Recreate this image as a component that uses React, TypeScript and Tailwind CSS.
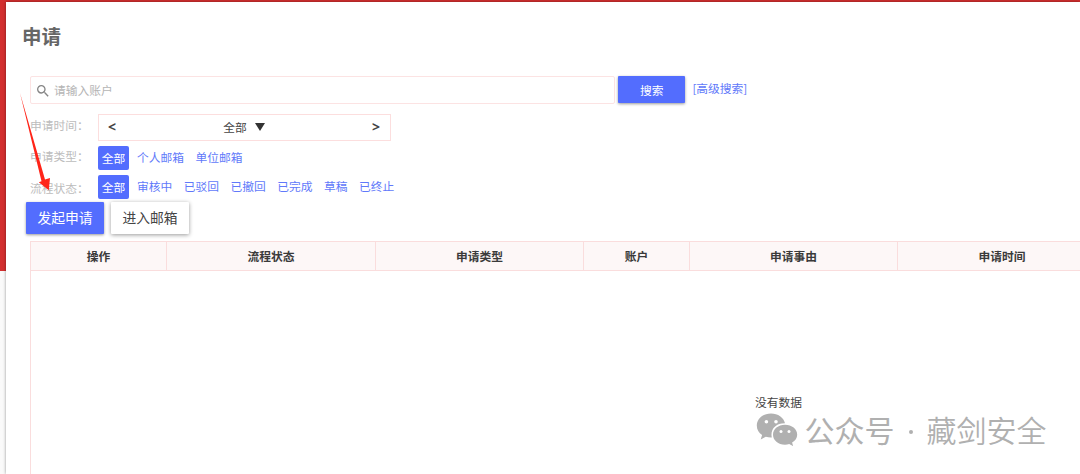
import React from "react";

const columns = [
  { label: "操作", width: "w-[136px]" },
  { label: "流程状态", width: "w-[209px]" },
  { label: "申请类型", width: "w-[208px]" },
  { label: "账户", width: "w-[106px]" },
  { label: "申请事由", width: "w-[208px]" },
  { label: "申请时间", width: "w-[209px]" },
];

function Filter({ label, options, offset }: { label: string; options: string[]; offset: string }) {
  return (
    <div className="flex h-6 items-center">
      <span className={`w-[68px] shrink-0 text-[#bcbcbc] ${offset}`}>{label}：</span>
      <span className="mr-2 flex h-6 w-[31px] items-center justify-center rounded-[2px] bg-[#536dfe] pb-px text-white">全部</span>
      <div className="flex gap-[11.5px] pb-[2px] text-[#6179fa]">
        {options.map((o) => (
          <a key={o}>{o}</a>
        ))}
      </div>
    </div>
  );
}

function SearchIcon() {
  return (
    <svg className="mt-px h-4 w-4" viewBox="0 0 24 24" fill="#858585">
      <path d="M15.5 14h-.79l-.28-.27A6.47 6.47 0 0 0 16 9.5 6.5 6.5 0 1 0 9.5 16c1.61 0 3.09-.59 4.23-1.57l.27.28v.79l5 4.99L20.49 19l-4.99-5zm-6 0C7.01 14 5 11.99 5 9.5S7.01 5 9.5 5 14 7.01 14 9.5 11.99 14 9.5 14z" />
    </svg>
  );
}

function WechatIcon() {
  return (
    <svg className="h-[34px] w-[42px]" viewBox="0 0 42 34">
      <path fill="#b0b0b0" d="M15 1.500C7 1.500 .8 6.500 .8 13.500c0 4.100 2 7.300 5.300 9.600L4.700 27.500l5.100-2.700c2 .6 4.100 .8 6 .7C14 17 20 11 29 11.200 27.700 5.500 22 1.500 15 1.500Z" />
      <path fill="#b0b0b0" d="M29 12.800c-6.800 0-12 4.300-12 9.900s5.200 10 12 10c1.500 0 2.900-.2 4.200-.6l3.900 2-1-3.500c3.200-2 5.100-4.700 5.100-7.900 0-5.600-5.400-9.900-12.200-9.900Z" />
      <g fill="#fff">
        <circle cx="10.400" cy="9.800" r="1.800" />
        <circle cx="20" cy="9.800" r="1.800" />
        <circle cx="25" cy="19.500" r="1.500" />
        <circle cx="33" cy="19.500" r="1.500" />
      </g>
    </svg>
  );
}

export default function App() {
  return (
    <div className="relative h-[474px] w-[1080px] overflow-hidden bg-white font-['Noto_Sans_CJK_SC',sans-serif] text-[11.75px] leading-none text-[#444]">
      <div className="flex h-full flex-col bg-linear-to-b from-[#d32f2f] from-[271px] to-[#fafafa] to-[271px] pt-[2px] pl-[6px]">
        <main className="flex flex-1 flex-col bg-white pl-6 shadow-[0_0_3px_rgba(0,0,0,0.4)]">
          <h1 className="-ml-2 flex h-[74px] items-center pb-[6px] text-[19.5px] font-bold text-[#666]">申请</h1>

          <div className="flex h-7 items-center">
            <div className="flex h-7 w-[585px] items-center gap-[3px] rounded-[2px] border border-[#fce3e3] pl-[4px] text-[#b5b5b5]">
              <SearchIcon />
              <span className="pb-px">请输入账户</span>
            </div>
            <button className="mb-px ml-[3.4px] h-[27px] w-[66.5px] rounded-[1px] bg-[#536dfe] text-white shadow-[0_1px_3px_rgba(0,0,0,0.4)]">搜索</button>
            <a className="ml-[7.5px] pb-1 text-[#6179fa]">[高级搜索]</a>
          </div>

          <div className="mt-[10px] flex h-[27px] items-center">
            <span className="w-[68px] pb-[5px] text-[#bcbcbc]">申请时间：</span>
            <div className="flex h-[27px] w-[293px] items-center justify-between border border-[#fcdede] pr-[10px] pl-[9px] pb-px">
              <span className="font-['Open_Sans',sans-serif] text-[14px] font-bold">&lt;</span>
              <span className="flex items-center gap-2">
                <span className="pb-px">全部</span>
                <svg className="h-2 w-[10px]" viewBox="0 0 10 8">
                  <path d="M0 0h10L5 8Z" fill="#333" />
                </svg>
              </span>
              <span className="font-['Open_Sans',sans-serif] text-[14px] font-bold">&gt;</span>
            </div>
          </div>

          <div className="mt-[5px] flex flex-col gap-[5px]">
            <Filter label="申请类型" options={["个人邮箱", "单位邮箱"]} offset="pb-[4px]" />
            <Filter label="流程状态" options={["审核中", "已驳回", "已撤回", "已完成", "草稿", "已终止"]} offset="pt-[2px]" />
          </div>

          <div className="mt-[3px] -ml-1 flex gap-[7px] text-[13.8px]">
            <button className="h-8 w-[78px] rounded-[1px] bg-[#536dfe] text-white shadow-[0_1px_3px_rgba(0,0,0,0.4)]">发起申请</button>
            <button className="h-8 w-[78px] rounded-[1px] bg-white shadow-[0_1px_4px_rgba(0,0,0,0.4)]">进入邮箱</button>
          </div>

          <section className="mt-[7px] flex flex-1 flex-col overflow-hidden border-l border-[#fadddd]">
            <div className="flex h-[30px] w-[1077px] shrink-0 border-y border-[#fadddd] bg-[#fdf7f7] font-bold text-[#3a3a3a]">
              {columns.map((c) => (
                <div key={c.label} className={`flex shrink-0 items-center justify-center border-r border-[#fadddd] ${c.width}`}>
                  {c.label}
                </div>
              ))}
            </div>
            <p className="mt-[125px] ml-[724px]">没有数据</p>
          </section>
        </main>
      </div>

      <svg className="absolute top-[92px] left-[18px] h-[100px] w-[36px]" viewBox="0 0 36 100">
        <path d="M2 1 27 87.500 32 86 30.800 98.300 20.800 90.300 23.500 89.300Z" fill="#ff2418" />
      </svg>

      <div className="absolute top-[412px] left-[756px] flex items-center text-[30px] text-[#b0b0b0]">
        <WechatIcon />
        <span className="ml-[6.5px] w-[92px]">公众号</span>
        <span className="flex w-[28px] justify-center pt-[5px]">
          <span className="h-1 w-1 rounded-full bg-[#b0b0b0]" />
        </span>
        <span className="ml-[2px] font-[350]">藏剑安全</span>
      </div>
    </div>
  );
}
